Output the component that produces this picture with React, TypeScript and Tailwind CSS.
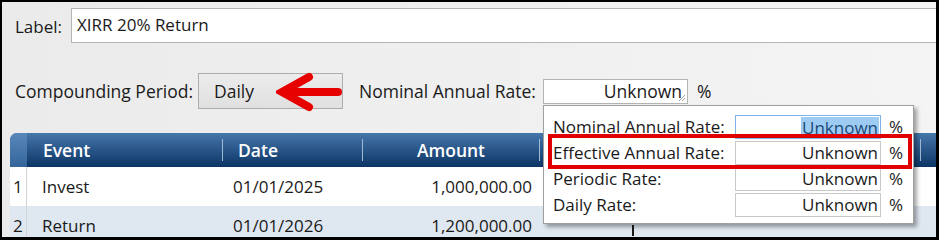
import React from "react";

// Rate settings panel: label, compounding period, nominal rate with its
// drop-down of related rates, and the cash-flow grid below.

const font = { fontFamily: '"Open Sans", "Noto Sans", sans-serif' };

const rates = [
  { label: "Nominal Annual Rate:", focused: true },
  { label: "Effective Annual Rate:", focused: false },
  { label: "Periodic Rate:", focused: false },
  { label: "Daily Rate:", focused: false },
];

const rows = [
  { n: 1, event: "Invest", date: "01/01/2025", amount: "1,000,000.00" },
  { n: 2, event: "Return", date: "01/01/2026", amount: "1,200,000.00" },
];

function Arrow() {
  return (
    <svg width="66" height="40" viewBox="0 0 66 40" className="absolute left-[274px] top-[70px]">
      <path d="M8 20 H62" stroke="#e60000" strokeWidth="8" strokeLinecap="round" />
      <path d="M33 5 L6 20 L33 35" fill="none" stroke="#e60000" strokeWidth="8" strokeLinecap="round" strokeLinejoin="miter" />
    </svg>
  );
}

function RatePopup() {
  return (
    <div className="absolute left-[541px] top-[103px] w-[371px] h-[119px] bg-white border border-[#a0a0a0] shadow-[3px_3px_4px_rgba(0,0,0,0.35)] pl-[9px] pt-[8px]">
      {rates.map((r) => (
        <div key={r.label} className="flex items-center h-[26px] text-[17px] text-[#1a1a1a]">
          <span className="w-[182px] shrink-0 whitespace-nowrap">{r.label}</span>
          <div
            className={
              "w-[146px] h-[24px] shrink-0 border flex items-center justify-end pr-[1px] " +
              (r.focused ? "border-[#7eb4ea]" : "border-[#c8c8c8]")
            }
          >
            {r.focused ? (
              <span className="bg-[#9dcbf1] text-[#1b4a78] leading-[21px] px-[1px]">Unknown</span>
            ) : (
              <span className="pr-[1px]">Unknown</span>
            )}
          </div>
          <span className="ml-[8px]">%</span>
        </div>
      ))}
    </div>
  );
}

function Grid() {
  return (
    <div className="mt-[24px] ml-[8px] flex flex-col">
      <div className="flex h-[34px] rounded-tl-[7px] overflow-hidden bg-gradient-to-b from-[#4677ab] to-[#0b3566] text-white text-[17.5px] font-semibold">
        <div className="w-[17px] bg-gradient-to-b from-[#5887ba] to-[#34659a]" />
        <div className="w-[195px] flex items-center pl-[16px]">Event</div>
        <div className="w-px my-[6px] bg-[#9fb9d6]" />
        <div className="w-[139px] flex items-center pl-[15px]">Date</div>
        <div className="w-px my-[6px] bg-[#9fb9d6]" />
        <div className="w-[176px] flex items-center justify-center">Amount</div>
        <div className="w-px my-[6px] bg-[#9fb9d6]" />
        <div className="w-[380px]" />
        <div className="w-px my-[6px] bg-[#9fb9d6]" />
        <div className="flex-1" />
      </div>
      {rows.map((r) => (
        <div
          key={r.n}
          className={"flex h-[39px] items-center text-[17px] text-[#1a1a1a] " + (r.n === 2 ? "bg-[#dfe7f0]" : "bg-white")}
        >
          <div className="w-[17px] h-full flex items-center pl-[3px] border-r border-[#d4d4d4]">{r.n}</div>
          <div className="w-[195px] pl-[15px]">{r.event}</div>
          <div className="w-[140px] pl-[11px]">{r.date}</div>
          <div className="w-[177px] text-right pr-[7px]">{r.amount}</div>
          <div className="relative w-[380px] h-full">
            {r.n === 2 && <div className="absolute left-[93px] top-[19px] w-[2px] h-[11px] bg-[#1a1a1a]" />}
          </div>
        </div>
      ))}
    </div>
  );
}

export default function App() {
  return (
    <div
      style={font}
      className="relative w-[939px] h-[240px] overflow-hidden border-l-2 border-t-2 border-r-[3px] border-b-[3px] border-black bg-gradient-to-r from-[#ebebeb] to-[#f4f4f4] text-[#1a1a1a]"
    >
      <div className="flex items-center pt-[6px] pl-[13px]">
        <span className="w-[56px] text-[17px] pt-[2px]">Label:</span>
        <div className="flex-1 h-[35px] bg-white border border-[#b4b4b4] pl-[5px] pt-[3px] text-[17px] -mr-[2px]">
          XIRR 20% Return
        </div>
      </div>

      <div className="flex items-center mt-[30px] pl-[13px] h-[36px] text-[17.5px]">
        <span className="w-[183px] whitespace-nowrap">Compounding Period:</span>
        <div className="w-[145px] h-[36px] flex items-center pl-[15px] border border-[#adadad] bg-gradient-to-b from-[#ececec] to-[#e0e0e0]">
          Daily
        </div>
        <span className="ml-[16px] w-[184px] whitespace-nowrap">Nominal Annual Rate:</span>
        <div className="w-[145px] h-[25px] bg-white border border-[#b4b4b4] flex items-center justify-end pr-[5px] relative">
          Unknown
          <svg width="8" height="8" viewBox="0 0 8 8" className="absolute right-[1px] bottom-[1px]">
            <path d="M7 1 L1 7 M7 4 L4 7" stroke="#a0a0a0" strokeWidth="1" />
          </svg>
        </div>
        <span className="ml-[9px]">%</span>
      </div>

      <Grid />

      <Arrow />
      <RatePopup />
      <div className="absolute left-[546px] top-[132px] w-[364px] h-[35px] border-[4px] border-[#e00000]" />
    </div>
  );
}
